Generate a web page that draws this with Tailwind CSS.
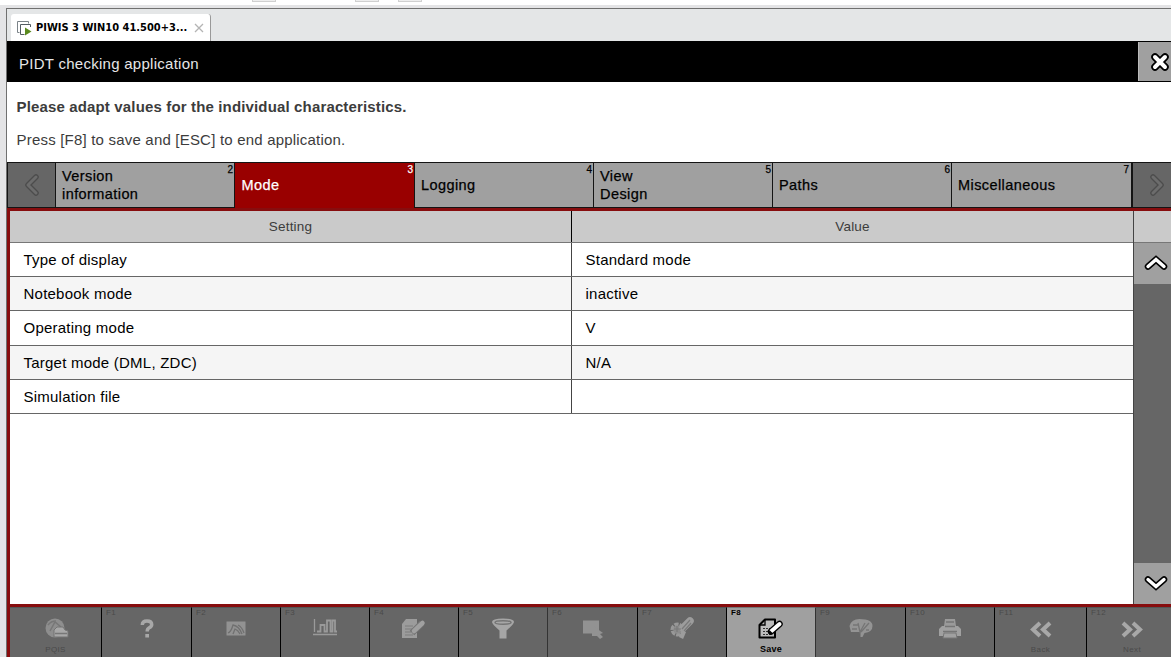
<!DOCTYPE html>
<html lang="en">
<head>
  <meta charset="UTF-8" />
  <title>PIDT checking application</title>
  <script src="https://cdn.jsdelivr.net/npm/@tailwindcss/browser@4"></script>
</head>
<body class="w-[1171px] h-[657px] overflow-hidden bg-[#e4e4e6] font-['Liberation_Sans',sans-serif] text-black flex flex-col">
  <!-- bottom edge of the host toolbar -->
  <div class="h-[5px] shrink-0 bg-white flex items-start">
    <div class="ml-[252px] w-6 h-[2px] border-b border-x border-[#d0d0d0] bg-[#eee]"></div>
    <div class="ml-[79px] w-6 h-[2px] border-b border-x border-[#d0d0d0] bg-[#eee]"></div>
    <div class="ml-[19px] w-6 h-[2px] border-b border-x border-[#d0d0d0] bg-[#eee]"></div>
  </div>

  <main class="mt-[3px] ml-[6px] flex-1 min-h-0 flex flex-col border-t border-l border-[#707070]">
    <!-- window tab -->
    <div class="h-8 shrink-0 bg-[#e4e6e7] pt-[5px] pl-1">
      <div class="w-[200px] h-[27px] bg-white rounded-t-[3px] border-r border-[#999] flex items-center pt-px">
        <svg class="ml-[6px] shrink-0" width="15" height="15" viewBox="0 0 15 15" fill="none">
          <path d="M2.5 11.5H.5V.5h11v2" stroke="#7b8388" />
          <path d="M13.500 6V3.500H3.500v10h4" stroke="#535c62" />
          <path d="M8 6.500v8l6.500-4z" fill="#5a8a1e" />
        </svg>
        <span class="ml-1 w-[153px] whitespace-nowrap font-['DejaVu_Sans_Condensed','DejaVu_Sans',sans-serif] font-stretch-condensed font-bold text-[11px]">PIWIS 3 WIN10 41.500+3...</span>
        <svg class="ml-[5px] shrink-0" width="10" height="10" viewBox="0 0 10 10"><path d="M1 1l8 8M9 1l-8 8" stroke="#b4b4b4" stroke-width="1.300" /></svg>
      </div>
    </div>

    <!-- title bar -->
    <header class="h-[41px] shrink-0 bg-black flex">
      <h1 class="flex-1 pl-3 pt-[2px] leading-[41px] text-[15px] tracking-[0.27px] text-[#e6e6e6]">PIDT checking application</h1>
      <div class="w-[33px] my-px bg-[#a0a0a0] border-l border-[#bbb] flex items-center pl-[10px]">
        <svg class="shrink-0" width="22" height="20" viewBox="0 0 22 20" stroke-linecap="round">
          <path d="M6 5l10 10M16 5l-10 10" stroke="#000" stroke-width="7.500" />
          <path d="M6 5l10 10M16 5l-10 10" stroke="#fff" stroke-width="4" />
        </svg>
      </div>
    </header>

    <section class="h-20 shrink-0 bg-white pl-[9.5px] pt-4 text-[#3c3c3c] text-[15px] leading-[18px]">
      <p class="font-bold tracking-[0.15px]">Please adapt values for the individual characteristics.</p>
      <p class="mt-[15px] tracking-[0.2px]">Press [F8] to save and [ESC] to end application.</p>
    </section>

    <!-- settings tabs -->
    <nav class="h-[46px] shrink-0 flex text-[14.5px] leading-[18px] tracking-[0.42px] [-webkit-text-stroke:0.25px] bg-[#141414] pt-px">
      <div class="w-[47px] ml-px mr-px mb-px bg-[#666] flex items-center justify-center">
        <svg width="18" height="22" viewBox="0 0 18 22" fill="none" stroke-linejoin="round" stroke-linecap="round"><path d="M13 3L5 11l8 8" stroke="#4c4c4c" stroke-width="5.500" /><path d="M13 3L5 11l8 8" stroke="#6c6c6c" stroke-width="3" /></svg>
      </div>
      <div class="relative w-[178px] mr-px mb-px bg-[#a0a0a0] pl-[6px] flex items-center"><span>Version<br />information</span><b class="absolute right-px top-px text-[10px] leading-3 font-normal tracking-normal">2</b></div>
      <div class="relative w-[179px] mr-px bg-[#990000] text-white pl-[6.5px] pb-px flex items-center"><span>Mode</span><b class="absolute right-px top-px text-[10px] leading-3 font-normal tracking-normal">3</b></div>
      <div class="relative w-[178px] mr-px mb-px bg-[#a0a0a0] pl-[6px] flex items-center"><span>Logging</span><b class="absolute right-px top-px text-[10px] leading-3 font-normal tracking-normal">4</b></div>
      <div class="relative w-[178px] mr-px mb-px bg-[#a0a0a0] pl-[6px] flex items-center"><span>View<br />Design</span><b class="absolute right-px top-px text-[10px] leading-3 font-normal tracking-normal">5</b></div>
      <div class="relative w-[178px] mr-px mb-px bg-[#a0a0a0] pl-[6px] flex items-center"><span>Paths</span><b class="absolute right-px top-px text-[10px] leading-3 font-normal tracking-normal">6</b></div>
      <div class="relative w-[179px] mr-[2px] mb-px bg-[#a0a0a0] pl-[6px] flex items-center"><span>Miscellaneous</span><b class="absolute right-[2px] top-px text-[10px] leading-3 font-normal tracking-normal">7</b></div>
      <div class="flex-1 mb-px bg-[#666] flex items-center pl-[15px]">
        <svg class="shrink-0" width="18" height="22" viewBox="0 0 18 22" fill="none" stroke-linejoin="round" stroke-linecap="round"><path d="M5 3l8 8-8 8" stroke="#4c4c4c" stroke-width="5.500" /><path d="M5 3l8 8-8 8" stroke="#6c6c6c" stroke-width="3" /></svg>
      </div>
    </nav>

    <!-- settings table -->
    <section class="h-[399px] shrink-0 border-y-[3px] border-l-[3px] border-[#870d0e] bg-white flex">
      <div class="w-[1123px] text-[15px] tracking-[0.23px]">
        <div class="h-[32px] bg-[#cacaca] border-b border-[#777] grid grid-cols-[561px_1fr] overflow-hidden text-center text-[13.5px] leading-[32px] text-[#3c3c3c] tracking-[0.2px]">
          <span>Setting</span><span class="border-l border-black">Value</span>
        </div>
        <div class="h-[34px] border-b border-[#666] grid grid-cols-[561px_1fr] overflow-hidden leading-[33px]"><span class="pl-[13.5px]">Type of display</span><span class="pl-[13.5px] border-l border-[#444]">Standard mode</span></div>
        <div class="h-[34px] bg-[#f5f5f5] border-b border-[#666] grid grid-cols-[561px_1fr] overflow-hidden leading-[33px]"><span class="pl-[13.5px]">Notebook mode</span><span class="pl-[13.5px] border-l border-[#444]">inactive</span></div>
        <div class="h-[35px] border-b border-[#666] grid grid-cols-[561px_1fr] overflow-hidden leading-[33px]"><span class="pl-[13.5px]">Operating mode</span><span class="pl-[13.5px] border-l border-[#444]">V</span></div>
        <div class="h-[34px] bg-[#f5f5f5] border-b border-[#666] grid grid-cols-[561px_1fr] overflow-hidden leading-[33px]"><span class="pl-[13.5px]">Target mode (DML, ZDC)</span><span class="pl-[13.5px] border-l border-[#444]">N/A</span></div>
        <div class="h-[34px] border-b border-[#666] grid grid-cols-[561px_1fr] overflow-hidden leading-[33px]"><span class="pl-[13.5px]">Simulation file</span><span class="border-l border-[#444]"></span></div>
      </div>
      <div class="flex-1 flex flex-col border-l border-[#444] bg-[#666]">
        <div class="h-[32px] bg-[#cacaca] border-b border-[#777]"></div>
        <div class="h-[41px] bg-[#a0a0a0] flex items-center pl-[10px] pb-[2px]">
          <svg class="shrink-0" width="24" height="18" viewBox="0 0 24 18" fill="none" stroke-linecap="round"><path d="M4 12.500L12 5.500l8 7" stroke="#000" stroke-width="6.500" /><path d="M4 12.500L12 5.500l8 7" stroke="#fff" stroke-width="3.400" /></svg>
        </div>
        <div class="flex-1"></div>
        <div class="h-[41px] bg-[#a0a0a0] flex items-center pl-[10px] pb-[2px]">
          <svg class="shrink-0" width="24" height="18" viewBox="0 0 24 18" fill="none" stroke-linecap="round"><path d="M4 5.500l8 7 8-7" stroke="#000" stroke-width="6.500" /><path d="M4 5.500l8 7 8-7" stroke="#fff" stroke-width="3.400" /></svg>
        </div>
      </div>
    </section>

    <!-- function keys -->
    <footer class="flex-1 border-l-[3px] border-[#870d0e] flex bg-[#666] text-[#4a4a4a] text-[8px] tracking-[0.4px]">
      <div class="relative w-[92px] shrink-0 border-r border-black border-t border-t-[#555] flex flex-col items-center pt-[9px]">
        <svg width="26" height="24" viewBox="0 0 26 24"><circle cx="12" cy="11" r="9.500" fill="#8e8e8e" /><path d="M5 8q3-4 8-4M7 14l5-9 6 5" stroke="#777" stroke-width="1.500" fill="none" /><path d="M11 13l3-3h6l2 3 3 1v6H11z" fill="#a8a8a8" stroke="#757575" /><path d="M12 16.500h12" stroke="#777" stroke-width="1.500" /></svg>
        <span class="mt-[3px] leading-3">PQIS</span>
      </div>
      <div class="relative w-[90px] shrink-0 border-r border-black border-t border-t-[#555] flex flex-col items-center pt-[8px]">
        <span class="absolute left-1 top-0 leading-[10px]">F1</span>
        <svg width="24" height="26" viewBox="0 0 24 26" fill="none"><path d="M7.300 9q0-4 4.700-4t4.700 3.500q0 2-2.500 3.300-2 1-2 3.700" stroke="#a8a8a8" stroke-width="3.500" /><path d="M10.300 18h3.700v3.500h-3.700z" fill="#a8a8a8" /></svg>
      </div>
      <div class="relative w-[89px] shrink-0 border-r border-black border-t border-t-[#555] flex flex-col items-center pt-[8px]">
        <span class="absolute left-1 top-0 leading-[10px]">F2</span>
        <svg width="24" height="26" viewBox="0 0 24 26" fill="none"><path d="M2.500 5.500h19v14h-19z" fill="#929292" /><path d="M4 17q3-1 5-8 6 1 9 9M9 18l2-5q3 1 5 5M14 9q4 2 6 8" stroke="#707070" stroke-width="1.300" /></svg>
      </div>
      <div class="relative w-[89px] shrink-0 border-r border-black border-t border-t-[#555] flex flex-col items-center pt-[7px]">
        <span class="absolute left-1 top-0 leading-[10px]">F3</span>
        <svg width="26" height="26" viewBox="0 0 26 26" fill="none" stroke="#9a9a9a"><path d="M2.500 4v13M1 19.500h24" stroke-width="1.300" /><path d="M5 16.500h3.500V10h4v6.500h2.500v-11h3.500v11h2V5.500h2.500v11h2" stroke-width="1.800" /></svg>
      </div>
      <div class="relative w-[89px] shrink-0 border-r border-black border-t border-t-[#555] flex flex-col items-center pt-[8px]">
        <span class="absolute left-1 top-0 leading-[10px]">F4</span>
        <svg class="-ml-[2px]" width="26" height="26" viewBox="0 0 26 26"><path d="M6 3h11v19H2V8z" fill="#9c9c9c" /><path d="M5 10h8M5 13h7M5 16h6M5 19h8" stroke="#7c7c7c" /><path d="M22 7L12 17" stroke="#757575" stroke-width="6.500" /><path d="M22.500 7L14 15" stroke="#a0a0a0" stroke-width="4.500" stroke-linecap="round" /></svg>
      </div>
      <div class="relative w-[89px] shrink-0 border-r border-[#333] border-t border-t-[#555] flex flex-col items-center pt-[8px]">
        <span class="absolute left-1 top-0 leading-[10px]">F5</span>
        <svg width="26" height="26" viewBox="0 0 26 26"><path d="M2 6q0-3.500 11-3.500T24 6q0 2-7.500 8.500v8h-7v-8Q2 8 2 6z" fill="#a6a6a6" /><ellipse cx="13" cy="6.500" rx="8" ry="1.700" fill="none" stroke="#747474" stroke-width="1.500" /></svg>
      </div>
      <div class="relative w-[90px] shrink-0 border-r border-black border-t border-t-[#555] flex flex-col items-center pt-[8px]">
        <span class="absolute left-1 top-0 leading-[10px]">F6</span>
        <svg width="24" height="26" viewBox="0 0 24 26"><path d="M2 4.500h16v13H2z" fill="#929292" /><path d="M11 20V9l11 8-3 1 3 3-3 2-3-3z" fill="#929292" /></svg>
      </div>
      <div class="relative w-[89px] shrink-0 border-r border-black border-t border-t-[#555] flex flex-col items-center pt-[7px]">
        <span class="absolute left-1 top-0 leading-[10px]">F7</span>
        <svg width="26" height="26" viewBox="0 0 26 26"><circle cx="8.500" cy="14.500" r="5" fill="none" stroke="#989898" stroke-width="4" stroke-dasharray="4 1" /><circle cx="8.500" cy="14.500" r="4" fill="#8c8c8c" /><path d="M14 13l7-7" stroke="#9c9c9c" stroke-width="7.500" stroke-linecap="round" /><path d="M13 14l8-9M15 16l7-8M5 14h7M8 11v6" stroke="#7a7a7a" stroke-width="1.200" /><path d="M12 23l3-7" stroke="#9c9c9c" stroke-width="4.500" /></svg>
      </div>
      <div class="relative w-[89px] shrink-0 border-r border-[#333] border-t border-t-[#777] bg-[#a0a0a0] text-black font-bold flex flex-col items-center pt-[9px]">
        <span class="absolute left-1 top-0 leading-[10px]">F8</span>
        <svg class="-ml-[2px]" width="26" height="24" viewBox="0 0 26 24" fill="none"><path d="M8 2.500h10v18H2.500V8z" fill="#bcbcbc" stroke="#000" stroke-width="2" stroke-linejoin="round" /><path d="M8 3v5H3" stroke="#000" stroke-width="1.300" /><path d="M6 11.500h8M6 14.500h5M6 17.500h9" stroke="#333" stroke-dasharray="2 1" /><path d="M14 14.500l8.500-7.500" stroke="#000" stroke-width="6.500" stroke-linecap="round" /><path d="M14.500 14l8-7" stroke="#fff" stroke-width="4" stroke-linecap="round" /><path d="M11.500 17l1-4 3 3z" fill="#000" /></svg>
        <span class="mt-[2px] leading-3 text-[9px] tracking-[0.2px]">Save</span>
      </div>
      <div class="relative w-[90px] shrink-0 border-r border-black border-t border-t-[#555] flex flex-col items-center pt-[7px]">
        <span class="absolute left-1 top-0 leading-[10px]">F9</span>
        <svg width="26" height="26" viewBox="0 0 26 26"><path d="M1.500 11q2-7 10-7 13 0 13 7 0 6-8 7l-2 4h-2v-5H3z" fill="#949494" /><path d="M5 10h5M4 14h5M10 8l2 9 5-9M13 17l8-9M18 15h3" stroke="#757575" stroke-width="1.300" fill="none" /></svg>
      </div>
      <div class="relative w-[89px] shrink-0 border-r border-black border-t border-t-[#555] flex flex-col items-center pt-[8px]">
        <span class="absolute left-1 top-0 leading-[10px]">F10</span>
        <svg width="26" height="26" viewBox="0 0 26 26"><path d="M8 3h10l1 7H7z" fill="#9a9a9a" /><path d="M5 10h16l3 3v7H2v-7z" fill="#a0a0a0" /><path d="M9 6h8M8 10.500h10M6 15.500h14" stroke="#757575" stroke-width="1.500" /><path d="M7 17h12l1 5H6z" fill="#a0a0a0" stroke="#777" /></svg>
      </div>
      <div class="relative w-[92px] shrink-0 border-r border-black border-t border-t-[#555] flex flex-col items-center pt-[9px]">
        <span class="absolute left-1 top-0 leading-[10px]">F11</span>
        <svg width="26" height="24" viewBox="0 0 26 24" fill="none"><path d="M12 6l-7 6.500 7 6.500M22 6l-7 6.500 7 6.500" stroke="#a8a8a8" stroke-width="4" /></svg>
        <span class="mt-[3px] leading-3">Back</span>
      </div>
      <div class="relative w-[90px] shrink-0 border-t border-t-[#555] flex flex-col items-center pt-[9px]">
        <span class="absolute left-1 top-0 leading-[10px]">F12</span>
        <svg width="26" height="24" viewBox="0 0 26 24" fill="none"><path d="M4 6l7 6.500L4 19M14 6l7 6.500-7 6.500" stroke="#a8a8a8" stroke-width="4" /></svg>
        <span class="mt-[3px] leading-3">Next</span>
      </div>
    </footer>
  </main>
</body>
</html>
